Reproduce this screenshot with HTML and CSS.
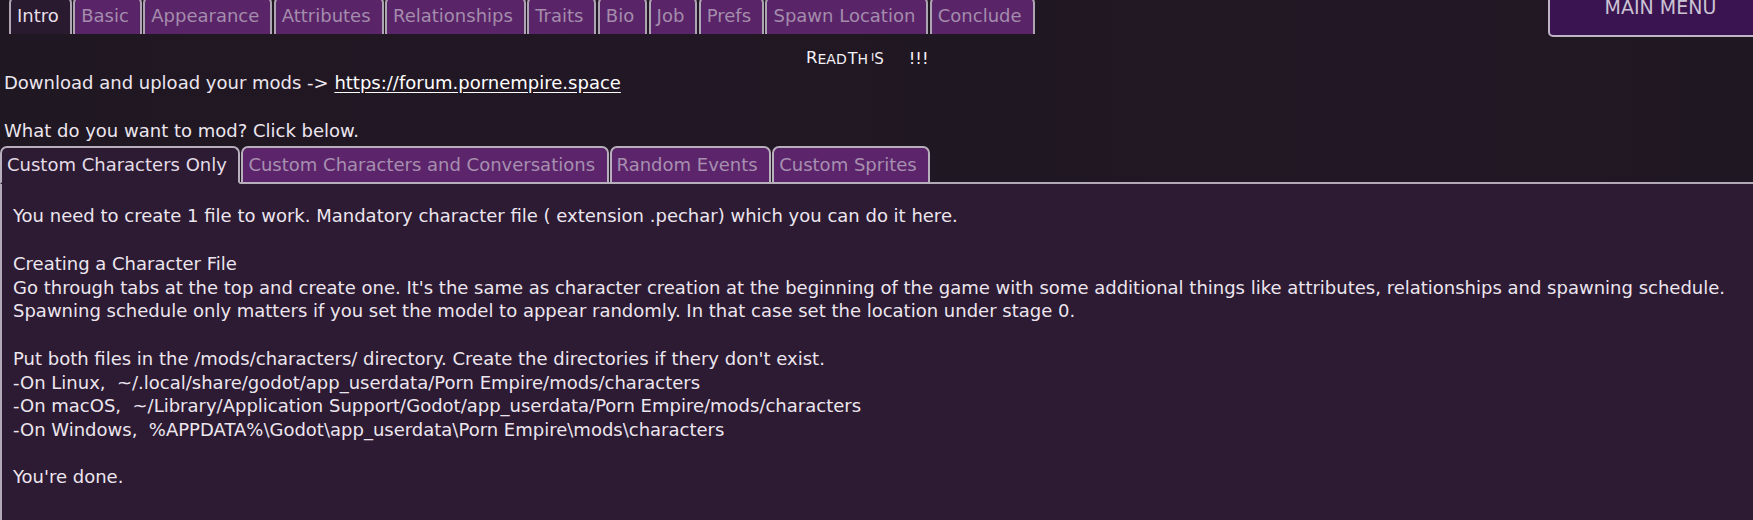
FILE: index.html
```html
<!DOCTYPE html>
<html>
<head>
<meta charset="utf-8">
<link rel="stylesheet" href="styles.css">
</head>
<body>
<div class="page">
  <div class="topbar">
    <div class="tabs">
      <div class="tab active">Intro</div>
      <div class="tab">Basic</div>
      <div class="tab">Appearance</div>
      <div class="tab">Attributes</div>
      <div class="tab">Relationships</div>
      <div class="tab">Traits</div>
      <div class="tab">Bio</div>
      <div class="tab">Job</div>
      <div class="tab">Prefs</div>
      <div class="tab">Spawn Location</div>
      <div class="tab">Conclude</div>
    </div>
    <div class="menu-btn">MAIN MENU</div>
  </div>

  <div class="notice"><span class="l-big r">R</span><span class="l-sm">EAD</span><span class="sp"> </span><span class="l-mid">T</span><span class="l-sm">H</span><span class="l-tiny">I</span><span class="l-s">S</span><span class="sp"> </span><span class="l-big bang">!!!</span></div>

  <div class="intro">
    <div>Download and upload your mods -&gt; <span class="link">https://forum.pornempire.space</span></div>
    <div class="blank"></div>
    <div>What do you want to mod? Click below.</div>
  </div>

  <div class="subtabs">
    <div class="subtab active">Custom Characters Only</div>
    <div class="subtab">Custom Characters and Conversations</div>
    <div class="subtab">Random Events</div>
    <div class="subtab">Custom Sprites</div>
  </div>

  <div class="panel">
    <div>You need to create 1 file to work. Mandatory character file ( extension .pechar) which you can do it here.</div>
    <div class="blank"></div>
    <div>Creating a Character File</div>
    <div>Go through tabs at the top and create one. It's the same as character creation at the beginning of the game with some additional things like attributes, relationships and spawning schedule.</div>
    <div>Spawning schedule only matters if you set the model to appear randomly. In that case set the location under stage 0.</div>
    <div class="blank"></div>
    <div>Put both files in the /mods/characters/ directory. Create the directories if thery don't exist.</div>
    <div>-On Linux, &nbsp;~/.local/share/godot/app_userdata/Porn Empire/mods/characters</div>
    <div>-On macOS, &nbsp;~/Library/Application Support/Godot/app_userdata/Porn Empire/mods/characters</div>
    <div>-On Windows, &nbsp;%APPDATA%\Godot\app_userdata\Porn Empire\mods\characters</div>
    <div class="blank"></div>
    <div>You're done.</div>
  </div>
</div>
</body>
</html>
```
FILE: styles.css
```css
html, body {
  margin: 0;
  padding: 0;
  height: 100%;
  overflow: hidden;
}
body {
  background:
    linear-gradient(90deg, rgba(255,255,255,0) 0%, rgba(60,30,60,0.10) 35%, rgba(255,255,255,0) 55%, rgba(60,30,60,0.08) 80%, rgba(255,255,255,0) 100%),
    #1f1722;
  color: #ece6ee;
  font-family: "DejaVu Sans", sans-serif;
  font-size: 18px;
}
.page {
  display: flex;
  flex-direction: column;
  height: 100%;
}

/* top tabs */
.topbar {
  display: flex;
  height: 34px;
  flex: none;
}
.tabs {
  display: flex;
  gap: 1.4px;
  margin-left: 9px;
  margin-top: -4px;
  height: 38px;
}
.tab {
  box-sizing: border-box;
  height: 38px;
  padding: 3px 11px 0 6px;
  line-height: 30px;
  background: #5a2468;
  color: #a48cad;
  border: 2px solid #aea5b2;
  border-bottom: none;
  border-radius: 7px 7px 0 0;
  white-space: nowrap;
}
.tab.active {
  background: #2a1a2f;
  color: #e6dfe9;
}
.menu-btn {
  box-sizing: border-box;
  margin-left: auto;
  margin-right: -20px;
  margin-top: -10px;
  width: 225px;
  height: 47px;
  padding-top: 4px;
  line-height: 22px;
  font-size: 19px;
  text-align: center;
  background: #3a1450;
  color: #cbc2d3;
  border: 2px solid #bfb3c6;
  border-radius: 5px;
  flex: none;
}

/* notice */
.notice {
  box-sizing: border-box;
  height: 37px;
  padding-top: 16px;
  padding-left: 806px;
  line-height: 16px;
  font-size: 16px;
  color: #f4f0f5;
  white-space: nowrap;
  flex: none;
}
.l-big { font-size: 16.5px; }
.l-mid { font-size: 16px; }
.l-sm { font-size: 14px; }
.l-s { font-size: 15px; }
.l-tiny { font-size: 11px; vertical-align: 3px; margin-left: 3px; }
.sp { font-size: 3px; }
.r { vertical-align: 1px; }
.bang { margin-left: 24px; }

/* intro lines */
.intro {
  padding-left: 4px;
  line-height: 23.8px;
  flex: none;
}
.blank { height: 23.8px; }
.link {
  color: #ffffff;
  text-decoration: underline;
  text-underline-offset: 3px;
}

/* sub tabs */
.subtabs {
  display: flex;
  gap: 1px;
  margin-top: 4px;
  height: 36px;
  border-bottom: 2px solid #b2aab6;
  flex: none;
}
.subtab {
  box-sizing: border-box;
  height: 38px;
  margin-bottom: -2px;
  padding: 0 11.5px 0 5px;
  line-height: 34px;
  background: #5c256b;
  color: #a78fb0;
  border: 2px solid #b8afbc;
  border-radius: 7px 7px 0 0;
  white-space: nowrap;
}
.subtab.active {
  background: #2d1a33;
  color: #e4dde7;
  border-bottom-color: #2d1a33;
}

/* panel */
.panel {
  flex: 1;
  background: #2d1a33;
  border-left: 2px solid #b2aab6;
  padding: 20px 11px;
  line-height: 23.7px;
  white-space: nowrap;
}
```
